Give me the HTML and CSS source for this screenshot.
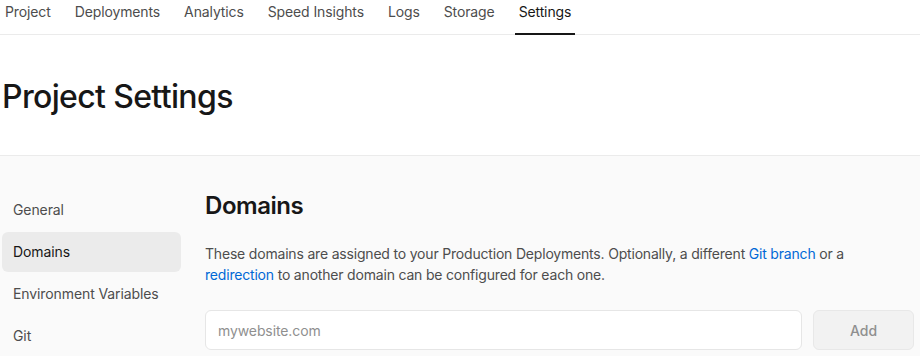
FILE: index.html
```html
<!DOCTYPE html>
<html lang="en">
<head>
<meta charset="utf-8">
<title>Project Settings</title>
<link rel="stylesheet" href="styles.css">
</head>
<body>
<nav class="tabs">
  <a class="tab">Project</a>
  <a class="tab">Deployments</a>
  <a class="tab">Analytics</a>
  <a class="tab">Speed Insights</a>
  <a class="tab">Logs</a>
  <a class="tab">Storage</a>
  <a class="tab active">Settings</a>
</nav>
<header class="page-header">
  <h1>Project Settings</h1>
</header>
<section class="band">
  <aside class="sidebar">
    <a class="side-item">General</a>
    <a class="side-item active">Domains</a>
    <a class="side-item">Environment Variables</a>
    <a class="side-item">Git</a>
  </aside>
  <main class="main">
    <h2>Domains</h2>
    <p class="desc">These domains are assigned to your Production Deployments. Optionally, a different <a class="link">Git branch</a> or a <a class="link">redirection</a> to another domain can be configured for each one.</p>
    <div class="add-row">
      <input class="domain-input" type="text" placeholder="mywebsite.com">
      <button class="add-btn">Add</button>
    </div>
  </main>
</section>
</body>
</html>
```
FILE: styles.css
```css
* { box-sizing: border-box; }
html, body { margin: 0; padding: 0; }
body {
  font-family: Inter, "Noto Sans", sans-serif;
  color: #171717;
  background: #fafafa;
  overflow: hidden;
}
.tabs {
  display: flex;
  gap: 16px;
  height: 35px;
  padding-left: 1px;
  background: #fff;
  border-bottom: 1px solid #ebebeb;
}
.tab {
  display: block;
  padding: 3px 4px 0;
  font-size: 14px;
  line-height: 18px;
  letter-spacing: -0.12px;
  color: #4d4d4d;
  border-bottom: 2px solid transparent;
  margin-bottom: -1px;
}
.tab.active {
  color: #171717;
  border-bottom-color: #171717;
}
.page-header {
  background: #fff;
  height: 121px;
  border-bottom: 1px solid #ebebeb;
  padding: 42px 0 0 2px;
}
h1 {
  margin: 0;
  font-size: 32px;
  line-height: 40px;
  font-weight: 500;
  letter-spacing: -0.65px;
}
.band {
  display: flex;
  gap: 24px;
  padding: 34px 6px 0 2px;
}
.sidebar {
  width: 179px;
  flex: none;
  display: flex;
  flex-direction: column;
  gap: 2px;
}
.side-item {
  display: block;
  height: 40px;
  line-height: 40px;
  padding-left: 11px;
  font-size: 14px;
  letter-spacing: -0.1px;
  color: #4d4d4d;
  border-radius: 6px;
}
.side-item.active {
  background: #ebebeb;
  color: #171717;
}
.main { flex: 1; min-width: 0; padding-top: 1px; }
h2 {
  margin: 0;
  font-size: 24px;
  line-height: 30px;
  font-weight: 600;
  letter-spacing: -0.45px;
}
.desc {
  margin: 22px 0 0;
  font-size: 14px;
  line-height: 21px;
  letter-spacing: -0.19px;
  color: #4d4d4d;
  max-width: 660px;
}
.link { color: #0068d6; }
.add-row {
  display: flex;
  gap: 11px;
  margin-top: 25px;
}
.domain-input {
  flex: 1;
  height: 40px;
  border: 1px solid #e6e6e6;
  border-radius: 6px;
  background: #fff;
  padding: 0 12px;
  font-family: inherit;
  font-size: 14px;
  letter-spacing: -0.1px;
  color: #171717;
  outline: none;
}
.domain-input::placeholder { color: #8f8f8f; }
.add-btn {
  width: 101px;
  height: 40px;
  border: 1px solid #e8e8e8;
  border-radius: 6px;
  background: #f2f2f2;
  color: #8f8f8f;
  font-family: inherit;
  font-size: 14px;
  font-weight: 500;
}
```
